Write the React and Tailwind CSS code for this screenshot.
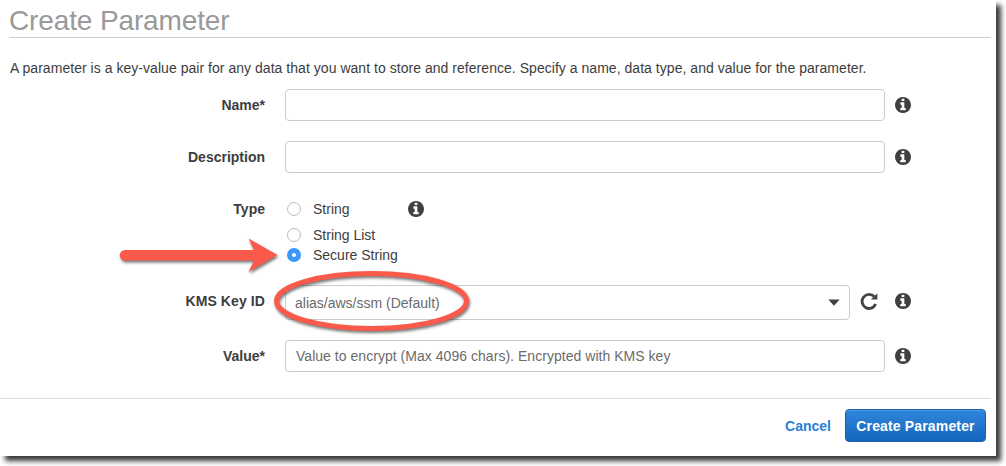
import React from "react";

function InfoIcon() {
  return (
    <svg viewBox="128 128 1536 1536" className="size-4 shrink-0 fill-[#404040]">
      <path d="M1152 1376v-160q0-14-9-23t-23-9h-96V672q0-14-9-23t-23-9H672q-14 0-23 9t-9 23v160q0 14 9 23t23 9h96v320h-96q-14 0-23 9t-9 23v160q0 14 9 23t23 9h448q14 0 23-9t9-23zm-128-896V320q0-14-9-23t-23-9H800q-14 0-23 9t-9 23v160q0 14 9 23t23 9h192q14 0 23-9t9-23zm640 416q0 209-103 385.5T1281.5 1561 896 1664t-385.5-103T231 1281.5 128 896t103-385.5T510.5 231 896 128t385.5 103T1561 510.5 1664 896z" />
    </svg>
  );
}

function RefreshIcon() {
  return (
    <svg viewBox="0 0 18 18" className="size-[18px] shrink-0">
      <path d="M14.2 4.6A7 7 0 1 0 15.6 12" fill="none" stroke="#444" strokeWidth="2.9" />
      <path d="M17.4 1.2V7.6H10.8Z" fill="#444" />
    </svg>
  );
}

function Label({ children }) {
  return <div className="w-[265px] shrink-0 text-right font-bold">{children}</div>;
}

function Field({ placeholder }) {
  return (
    <input
      placeholder={placeholder}
      className="ml-5 h-8 w-[600px] shrink-0 rounded-[4px] border border-[#ccc] bg-white px-[10px] tracking-[0.035px] placeholder:text-[#6b6b6b]"
    />
  );
}

function Radio({ label, checked }) {
  return (
    <label className="flex h-5 items-center">
      <span
        className={
          checked
            ? "flex size-[14px] items-center justify-center rounded-full bg-[#3b99fc]"
            : "flex size-[14px] items-center justify-center rounded-full border border-[#bdbdbd] bg-white"
        }
      >
        {checked && <span className="size-1 rounded-full bg-white" />}
      </span>
      <span className="ml-3">{label}</span>
    </label>
  );
}

function Annotations() {
  return (
    <svg className="pointer-events-none absolute top-0 left-0 h-[456px] w-[600px]" viewBox="0 0 600 456">
      <g className="[filter:drop-shadow(1px_2px_1.5px_rgba(0,0,0,0.55))]">
        <path
          d="M125 250H254L248.500 238.500L277.500 255L248.500 272L254 260.500H125A5.200 5.200 0 0 1 125 250Z"
          fill="#fb5a4b"
        />
        <ellipse cx="371.500" cy="301" rx="95" ry="27.500" fill="none" stroke="#fb5a4b" strokeWidth="5" />
      </g>
    </svg>
  );
}

export default function App() {
  return (
    <div className="h-[466px] w-[1006px] overflow-hidden bg-white font-['Liberation_Sans',Arial,sans-serif] text-[14px] leading-5 text-[#3d3d3d]">
      <main className="relative flex h-[456px] w-[996px] flex-col bg-white shadow-[5px_5px_5px_0px_#3a3a3a]">
        <header className="mr-[5px] ml-[9px] h-[38px] shrink-0 border-b border-[#ccc]">
          <h1 className="pt-[5px] text-[28px] leading-8 tracking-[-0.13px] text-[#999]">Create Parameter</h1>
        </header>
        <p className="mt-5 ml-[10px] tracking-[0.037px] whitespace-nowrap">
          A parameter is a key-value pair for any data that you want to store and reference. Specify a name, data type, and value for the parameter.
        </p>
        <div className="mt-[11px] flex items-center gap-[10px]">
          <div className="flex items-center"><Label>Name*</Label><Field /></div>
          <InfoIcon />
        </div>
        <div className="mt-5 flex items-center gap-[10px]">
          <div className="flex items-center"><Label>Description</Label><Field /></div>
          <InfoIcon />
        </div>
        <div className="mt-[26px] flex h-[66px] items-start">
          <Label>Type</Label>
          <div className="ml-[22px] w-[121px]">
            <Radio label="String" />
            <div className="mt-[6px]"><Radio label="String List" /></div>
            <Radio label="Secure String" checked />
          </div>
          <div className="pt-[2px]"><InfoIcon /></div>
        </div>
        <div className="mt-5 flex h-[35px] items-center">
          <div className="pb-1 tracking-[0.1px]"><Label>KMS Key ID</Label></div>
          <div className="ml-5 flex h-[35px] w-[565px] items-center justify-between rounded-[4px] border border-[#ccc] pr-[9px] pl-[9px] text-[#6b6b6b]">
            <span>alias/aws/ssm (Default)</span>
            <svg viewBox="0 0 12 7" className="h-[7px] w-3"><path d="M.3.400H11.700L6 6.700Z" fill="#404040" /></svg>
          </div>
          <div className="ml-[10px] pb-[3px]"><RefreshIcon /></div>
          <div className="ml-[17px] pb-[3px]"><InfoIcon /></div>
        </div>
        <div className="mt-5 flex items-center gap-[10px]">
          <div className="flex items-center"><Label>Value*</Label><Field placeholder="Value to encrypt (Max 4096 chars). Encrypted with KMS key" /></div>
          <InfoIcon />
        </div>
        <footer className="mt-[26px] mr-[5px] flex items-start justify-end border-t border-[#ddd] pt-[10px] pr-[5px] font-bold">
          <button className="mr-[14px] h-[33px] text-[#2a80d8]">Cancel</button>
          <button className="h-[33px] w-[141px] rounded-[4px] border border-[#1a5fae] bg-linear-to-b from-[#2f86dc] to-[#1566bd] tracking-[0.15px] text-white shadow-[inset_0_1px_0_rgba(255,255,255,0.15)]">
            Create Parameter
          </button>
        </footer>
        <Annotations />
      </main>
    </div>
  );
}
